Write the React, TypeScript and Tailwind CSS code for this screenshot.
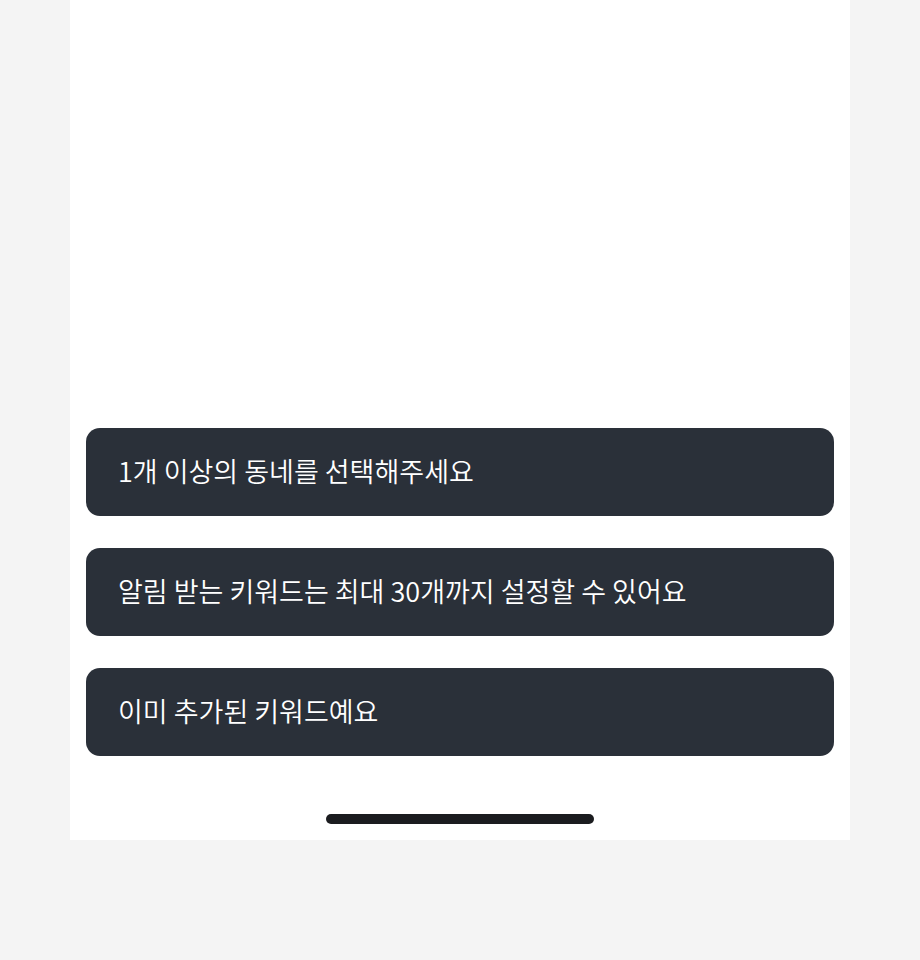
import React from 'react';

const messages = [
  '1개 이상의 동네를 선택해주세요',
  '알림 받는 키워드는 최대 30개까지 설정할 수 있어요',
  '이미 추가된 키워드예요',
];

const Toast: React.FC<{ text: string }> = ({ text }) => (
  <div className="flex items-center h-[88px] px-8 pb-[3px] rounded-[14px] bg-[#2a3039]">
    <span className="text-[27px] leading-none font-[350] text-white">{text}</span>
  </div>
);

export default function App() {
  return (
    <div
      className="min-h-[960px] bg-[#f4f4f4]"
      style={{ fontFamily: '"Noto Sans CJK KR", "Noto Sans", sans-serif' }}
    >
      <div className="mx-auto w-[780px] h-[840px] bg-white flex flex-col">
        <div className="flex-1" />
        {/* Toast stack */}
        <div className="flex flex-col gap-8 px-4">
          {messages.map(m => (
            <Toast key={m} text={m} />
          ))}
        </div>
        {/* Home indicator */}
        <div className="flex justify-center pt-[58px] pb-4">
          <div className="w-[268px] h-[10px] rounded-full bg-[#1b1c1f]" />
        </div>
      </div>
    </div>
  );
}
